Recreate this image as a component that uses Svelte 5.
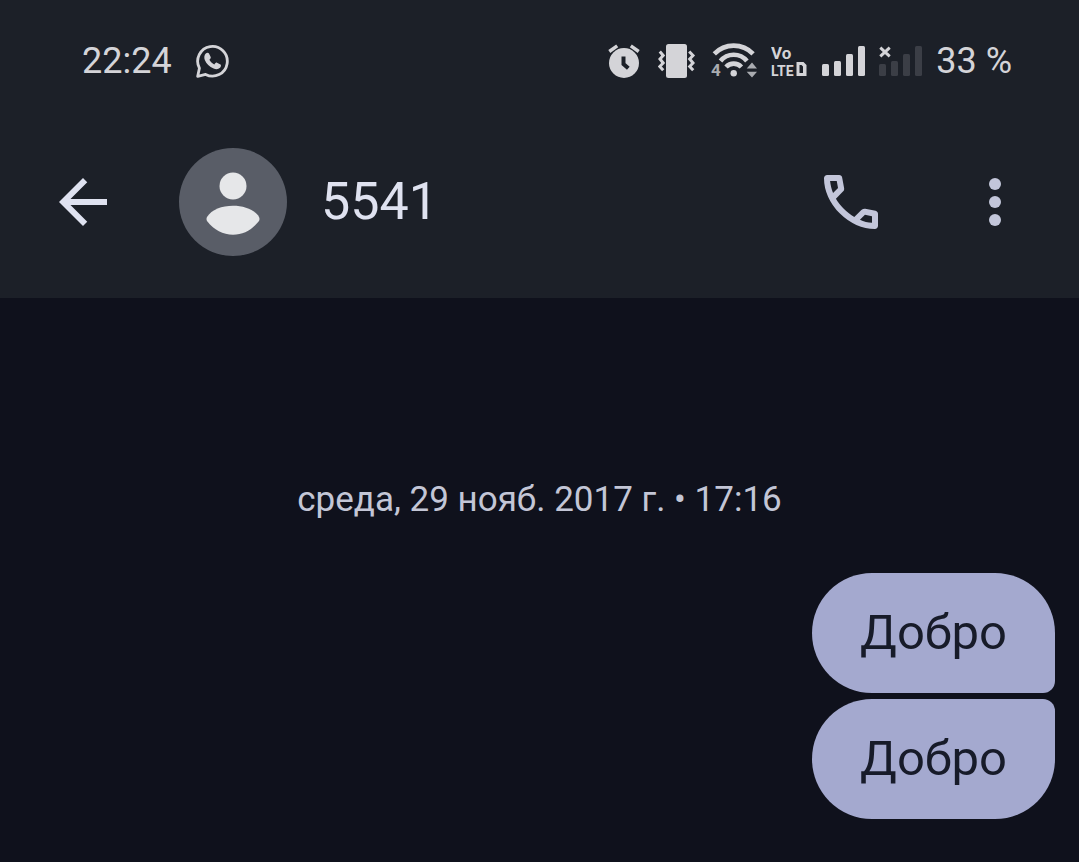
<script>
  let title = "5541";
  let clock = "22:24";
  let battery = "33 %";
  let dateLabel = "среда, 29 нояб. 2017 г. • 17:16";
  let messages = ["Добро", "Добро"];

  // x, top of each signal bar
  const bars = [
    [0, 21],
    [12, 18],
    [24, 11],
    [36, 3]
  ];
</script>

<div class="screen">
  <header>
    <div class="status">
      <time>{clock}</time>
      <svg class="whatsapp" width="36" height="36" viewBox="0 0 36 36">
        <path
          class="line"
          d="M2.7 33.3L4.4 25.2A14.8 14.8 0 1 1 10.6 31.4Z"
          stroke-width="2.8"
          stroke-linejoin="round" />
        <path
          class="ink"
          d="M10.8 10.600c1-1.200 2.600-1.200 3.200-.2l1.700 3.600c.3.800-.1 1.500-1.300 2.800 1.200 2.200 2.700 3.600 4.900 4.600 1.200-1.400 1.900-2 2.700-1.700l3.500 1.800c.8.500.5 2.300-.5 3.300-1.600 1.600-3.900 1.800-6.400.8-4.200-1.700-7.200-4.800-8.800-8.500-.9-2.400-.6-4.900 1-6.500z" />
      </svg>
      <div class="indicators">
        <svg width="36" height="36" viewBox="0 0 36 36">
          <circle class="ink" cx="16" cy="20" r="15" />
          <path class="line" d="M1.3 8.5L9.2 2.8M22.800 2.8L30.700 8.5" stroke-width="3.4" />
          <path class="cut" d="M15.500 13.500V21L20.300 25.300" />
        </svg>
        <svg width="39" height="36" viewBox="0 0 39 36">
          <rect class="ink" x="8" y="1" width="21" height="34" rx="2.5" />
          <path
            class="line"
            stroke-width="3"
            d="M1.8 8.5L5.2 12.500 2 16 5.200 20 1.800 23.500 5.200 27.300M31.200 8.500L35 12.500 31.700 16 35 20 31.700 23.500 35.200 27.300" />
        </svg>
        <svg width="46" height="36" viewBox="0 0 46 36">
          <g class="line" stroke-width="4.600">
            <path d="M3.300 10.800A27 27 0 0 1 42.100 10.800" />
            <path d="M9.500 18A17 17 0 0 1 35.900 18" />
            <path d="M15 24A10.500 10.500 0 0 1 30.400 24" />
          </g>
          <circle class="ink" cx="22.700" cy="30.300" r="3.200" />
          <text class="gen" x="0" y="33">4</text>
          <path class="dim" d="M35.700 25.500L41 19.500 46 25.500zM35.700 28.800H46L41 34.500z" />
        </svg>
        <svg width="37" height="36" viewBox="0 0 37 36">
          <text class="volte vo" x="0" y="16">Vo</text>
          <text class="volte" x="0" y="33">LTE</text>
          <path class="ink" fill-rule="evenodd" d="M25.500 19h7l3 3v11H25.500zM28.500 22v8h3.500v-6.500l-1.500-1.500z" />
        </svg>
        <svg width="43" height="36" viewBox="0 0 43 36">
          {#each bars as [x, top]}
            <rect class="ink" {x} y={top} width="7" height={33 - top} rx="1.5" />
          {/each}
        </svg>
        <svg width="43" height="36" viewBox="0 0 43 36">
          {#each bars as [x, top]}
            <rect class="off" {x} y={top} width="7" height={33 - top} rx="1.5" />
          {/each}
          <path class="line" stroke-width="3" d="M1.300 4.700L10.700 13.300M10.700 4.700L1.300 13.300" />
        </svg>
        <span>{battery}</span>
      </div>
    </div>

    <div class="toolbar">
      <button class="back" aria-label="Назад">
        <svg width="72" height="72" viewBox="0 0 24 24">
          <path d="M20 11H7.830l5.590-5.590L12 4l-8 8 8 8 1.410-1.410L7.830 13H20v-2z" />
        </svg>
      </button>
      <svg class="avatar" width="108" height="108" viewBox="0 0 108 108">
        <circle class="disc" cx="54" cy="54" r="54" />
        <circle class="person" cx="54" cy="38" r="13.5" />
        <path
          class="person"
          d="M28 69C32.500 61.500 43 57.700 54 57.700S75.500 61.500 80 69Q81 71 80 73C73 82 64 86.700 54 86.700S35 82 28 73Q27 71 28 69z" />
      </svg>
      <h1>{title}</h1>
      <button aria-label="Позвонить">
        <svg width="72" height="72" viewBox="0 0 24 24">
          <path
            d="M19.950 21q-3.125 0-6.175-1.363Q10.725 18.275 8.225 15.775q-2.500-2.500-3.862-5.550Q3 7.175 3 4.050q0-.45.3-.75t.75-.3H8.100q.35 0 .625.237.275.238.325.563l.65 3.500q.05.4-.025.675-.075.275-.275.475L6.975 10.900q.5.925 1.187 1.787.688.863 1.513 1.663.775.775 1.625 1.438.85.662 1.800 1.212l2.350-2.350q.225-.225.588-.338.362-.112.712-.062l3.450.7q.35.1.575.363.225.262.225.587v4.050q0 .45-.3.750t-.75.300ZM6.025 9l1.650-1.650L7.250 5H5.025q.125 1.025.35 2.025.225 1 .65 1.975Zm8.950 8.950q.975.425 1.987.675 1.013.25 2.038.325v-2.200l-2.350-.475Z" />
        </svg>
      </button>
      <button aria-label="Ещё">
        <svg width="72" height="72" viewBox="0 0 24 24">
          <circle cx="12" cy="6" r="2" />
          <circle cx="12" cy="12" r="2" />
          <circle cx="12" cy="18" r="2" />
        </svg>
      </button>
    </div>
  </header>

  <main>
    <p class="date">{dateLabel}</p>
    <ul>
      {#each messages as message}
        <li>{message}</li>
      {/each}
    </ul>
  </main>
</div>

<style>
  :global(body) {
    margin: 0;
    background: #0f111c;
  }
  .screen {
    min-height: 100vh;
    box-sizing: border-box;
    background: #0f111c;
    font-family: Roboto, "Noto Sans", sans-serif;
  }
  header {
    background: #1c2028;
    padding-bottom: 16px;
  }
  svg {
    display: block;
    flex: none;
  }
  .status {
    display: flex;
    align-items: center;
    height: 122px;
    padding: 0 67px 0 82px;
    color: #d4d4d8;
    font-size: 36px;
    line-height: 42px;
    white-space: nowrap;
  }
  .whatsapp {
    margin-left: 23px;
  }
  .indicators {
    display: flex;
    align-items: center;
    gap: 14px;
    margin-left: auto;
  }
  .ink {
    fill: #d4d4d8;
  }
  .line {
    fill: none;
    stroke: #d4d4d8;
  }
  .cut {
    fill: none;
    stroke: #1c2028;
    stroke-width: 4px;
  }
  .dim {
    fill: #a9abb0;
  }
  .off {
    fill: #3b3e46;
  }
  .gen {
    fill: #a9abb0;
    font-size: 17px;
    font-weight: 700;
  }
  .volte {
    fill: #d4d4d8;
    font-size: 14px;
    font-weight: 700;
  }
  .vo {
    font-size: 17px;
  }
  .toolbar {
    display: flex;
    align-items: center;
    height: 160px;
    padding: 0 48px 0 47px;
  }
  button {
    border: none;
    padding: 0;
    background: none;
    cursor: pointer;
    fill: #c3c6da;
  }
  button + button {
    margin-left: 72px;
  }
  .back {
    margin-right: 60px;
    fill: #dfe2f0;
  }
  .disc {
    fill: #595d67;
  }
  .person {
    fill: #e6e7e9;
  }
  h1 {
    flex: 1;
    margin: 0 0 0 34px;
    color: #dfe2f0;
    font-size: 52px;
    font-weight: 400;
    line-height: 60px;
  }
  main {
    padding: 180px 24px 40px;
  }
  .date {
    margin: 0 0 51px;
    color: #c3c6d6;
    font-size: 35px;
    line-height: 44px;
    text-align: center;
  }
  ul {
    display: flex;
    flex-direction: column;
    align-items: flex-end;
    gap: 6px;
    margin: 0;
    padding: 0;
    list-style: none;
  }
  li {
    padding: 30px 48px;
    border-radius: 60px;
    background: #a4a9cf;
    color: #171b29;
    font-size: 49px;
    line-height: 60px;
  }
  li:first-child {
    border-bottom-right-radius: 12px;
  }
  li:last-child {
    border-top-right-radius: 12px;
  }
</style>
